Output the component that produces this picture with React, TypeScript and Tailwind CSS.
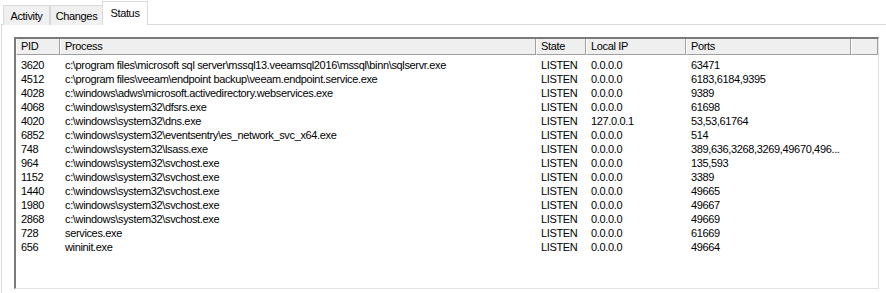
const rows: [string, string, string, string, string][] = [
  ["3620", "c:\\program files\\microsoft sql server\\mssql13.veeamsql2016\\mssql\\binn\\sqlservr.exe", "LISTEN", "0.0.0.0", "63471"],
  ["4512", "c:\\program files\\veeam\\endpoint backup\\veeam.endpoint.service.exe", "LISTEN", "0.0.0.0", "6183,6184,9395"],
  ["4028", "c:\\windows\\adws\\microsoft.activedirectory.webservices.exe", "LISTEN", "0.0.0.0", "9389"],
  ["4068", "c:\\windows\\system32\\dfsrs.exe", "LISTEN", "0.0.0.0", "61698"],
  ["4020", "c:\\windows\\system32\\dns.exe", "LISTEN", "127.0.0.1", "53,53,61764"],
  ["6852", "c:\\windows\\system32\\eventsentry\\es_network_svc_x64.exe", "LISTEN", "0.0.0.0", "514"],
  ["748", "c:\\windows\\system32\\lsass.exe", "LISTEN", "0.0.0.0", "389,636,3268,3269,49670,496..."],
  ["964", "c:\\windows\\system32\\svchost.exe", "LISTEN", "0.0.0.0", "135,593"],
  ["1152", "c:\\windows\\system32\\svchost.exe", "LISTEN", "0.0.0.0", "3389"],
  ["1440", "c:\\windows\\system32\\svchost.exe", "LISTEN", "0.0.0.0", "49665"],
  ["1980", "c:\\windows\\system32\\svchost.exe", "LISTEN", "0.0.0.0", "49667"],
  ["2868", "c:\\windows\\system32\\svchost.exe", "LISTEN", "0.0.0.0", "49669"],
  ["728", "services.exe", "LISTEN", "0.0.0.0", "61669"],
  ["656", "wininit.exe", "LISTEN", "0.0.0.0", "49664"],
];

// column widths measured off the header separators
const cols = ["w-[44px]", "w-[476px]", "w-[50px]", "w-[100px]", "w-[165px]"];
const headers = ["PID", "Process", "State", "Local IP", "Ports"];

export default function App() {
  return (
    <div
      className="w-[886px] h-[293px] bg-white overflow-hidden text-[11px] leading-[14px] tracking-[-0.35px] text-black"
      style={{ fontFamily: '"Liberation Sans", Arial, sans-serif' }}
    >
      {/* tab strip */}
      <div className="flex items-end h-[25px] pl-[3px] relative z-10">
        <Tab label="Activity" width="w-[47px]" />
        <Tab label="Changes" width="w-[53px]" />
        <Tab label="Status" width="w-[46px]" active />
      </div>

      {/* tab page */}
      <div className="ml-[1px] -mt-[1px] h-[270px] border-l border-t border-[#d9d9d9] bg-white pl-[12px] pt-[12px] pr-[7px]">
        <div className="h-[252px] border-l-2 border-t-2 border-l-[#7a7a7a] border-t-[#7a7a7a] border-r border-b border-r-[#e3e3e3] border-b-[#e3e3e3] bg-white flex flex-col">
          {/* header */}
          <div className="flex h-[16px] shrink-0">
            {headers.map((h, i) => (
              <div
                key={h}
                className={`${cols[i]} shrink-0 bg-[#efefef] border-l border-l-white border-r border-r-[#a0a0a0] border-b border-b-[#a0a0a0] pl-[4px] leading-[15px]`}
              >
                {h}
              </div>
            ))}
            <div className="flex-1 bg-[#efefef] border-l border-l-white border-r border-r-[#a0a0a0] border-b border-b-[#a0a0a0]" />
          </div>

          {/* rows */}
          <div className="pt-[3px]">
            {rows.map((r, ri) => (
              <div key={ri} className="flex h-[14px]">
                {r.map((c, ci) => (
                  <div key={ci} className={`${cols[ci]} shrink-0 pl-[5px] whitespace-nowrap overflow-hidden`}>
                    {c}
                  </div>
                ))}
              </div>
            ))}
          </div>
        </div>
      </div>
    </div>
  );
}

function Tab({ label, width, active }: { label: string; width: string; active?: boolean }) {
  return (
    <div
      className={[
        width,
        "border border-[#d9d9d9] border-b-0 text-center shrink-0",
        active
          ? "h-[24px] bg-white pt-[4px] -ml-[1px]"
          : "h-[20px] bg-[#f0f0f0] pt-[3px]",
      ].join(" ")}
    >
      {label}
    </div>
  );
}
